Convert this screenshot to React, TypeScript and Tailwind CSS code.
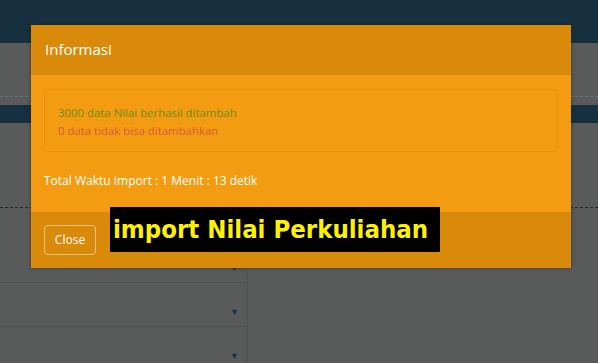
import React from 'react';

const SelectRow: React.FC = () => (
  <div className="flex h-[44px] w-[248px] items-end justify-end border-r border-b border-[#4e5257] pb-[10px] pr-[8px]">
    <span className="text-[9px] leading-none text-[#1b3445]">▼</span>
  </div>
);

export default function App() {
  return (
    <div className="relative h-[363px] w-[598px] overflow-hidden bg-[#595a5a] font-['Open_Sans','Noto_Sans',sans-serif]">
      {/* page behind the backdrop */}
      <div className="h-[43px] bg-[#17303f]" />
      <div className="h-[54px] border-b border-dashed border-[#6e7073]" />
      <div className="mt-[8px] h-[18px] bg-[#17303f]" />
      <div className="h-[85px] border-b border-dashed border-[#1d2a33]" />
      <div className="h-[31px]" />
      <div className="flex flex-col">
        <SelectRow />
        <SelectRow />
        <SelectRow />
      </div>

      {/* modal */}
      <div className="absolute left-[31px] top-[25px] flex w-[540px] flex-col shadow-[0_0_4px_rgba(0,0,0,0.35)]">
        <div className="flex h-[50px] items-center border-b border-[#d5860a] bg-[#d98a0b] px-[14px]">
          <h3 className="text-[15px] text-white">Informasi</h3>
        </div>
        <div className="flex h-[137px] flex-col bg-[#f39c12] px-[13px] pt-[14px]">
          <div className="h-[63px] rounded-[4px] border border-[#e6920e] px-[13px] pt-[14px] text-[11.4px] leading-[18px]">
            <p className="text-[#6b8c1c]">3000 data Nilai berhasil ditambah</p>
            <p className="text-[#dd5a3a]">0 data tidak bisa ditambahkan</p>
          </div>
          <p className="mt-[20px] text-[12px] text-white">Total Waktu Import : 1 Menit : 13 detik</p>
        </div>
        <div className="flex h-[56px] items-center bg-[#d98a0b] px-[13px]">
          <button className="h-[30px] w-[52px] rounded-[4px] border border-[#efc27a] text-[12px] text-white">
            Close
          </button>
        </div>
      </div>

      {/* caption overlay */}
      <div className="absolute left-[110px] top-[207px] flex h-[45px] w-[330px] items-center bg-black pl-[3px]">
        <p className="whitespace-nowrap font-['DejaVu_Sans_Condensed',sans-serif] text-[25.5px] font-bold leading-none text-[#fff200]">
          import Nilai Perkuliahan
        </p>
      </div>
    </div>
  );
}
